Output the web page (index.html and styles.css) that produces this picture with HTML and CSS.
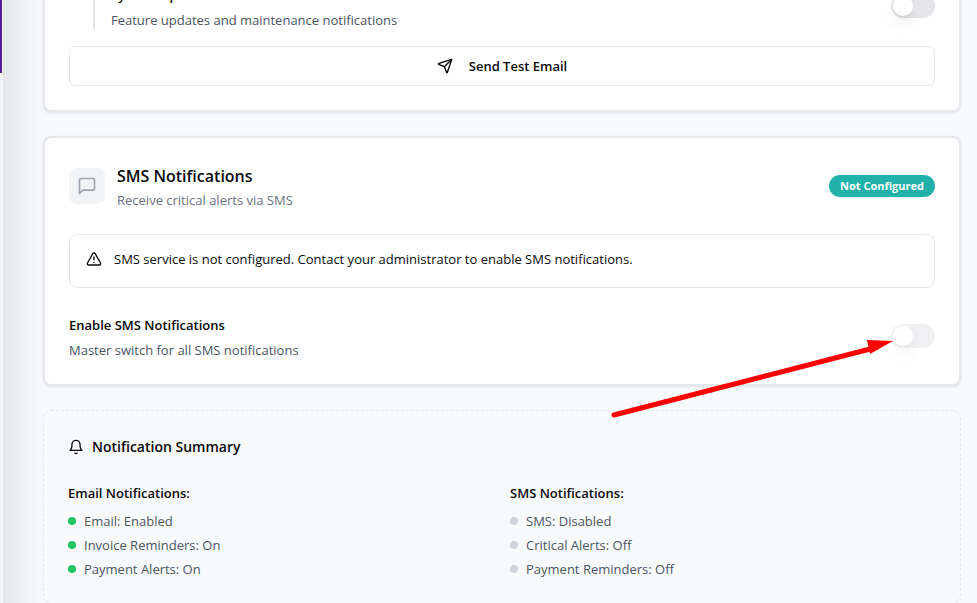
FILE: index.html
```html
<!DOCTYPE html>
<html lang="en">
<head>
<meta charset="utf-8">
<title>Notification Settings</title>
<link rel="stylesheet" href="styles.css">
</head>
<body>
<div class="page">
  <aside class="sidebar"><div class="sidebar-active"></div></aside>
  <main class="content">
    <section class="card">
      <div class="setting nested">
        <div>
          <label class="setting-label" for="system-updates">System Updates</label>
          <p class="setting-hint">Feature updates and maintenance notifications</p>
        </div>
        <input class="switch" type="checkbox" role="switch" id="system-updates">
      </div>
      <button class="test-button" type="button">
        <svg class="icon" viewBox="0 0 24 24"><path d="M14.536 21.686a.5.5 0 0 0 .937-.024l6.5-19a.496.496 0 0 0-.635-.635l-19 6.5a.5.5 0 0 0-.024.937l7.93 3.18a2 2 0 0 1 1.112 1.11z"/><path d="m21.854 2.147-10.94 10.939"/></svg>
        Send Test Email
      </button>
    </section>

    <section class="card">
      <header class="card-header">
        <div class="icon-box">
          <svg class="icon icon-large" viewBox="0 0 24 24"><path d="M21 15a2 2 0 0 1-2 2H7l-4 4V5a2 2 0 0 1 2-2h14a2 2 0 0 1 2 2z"/></svg>
        </div>
        <div class="card-heading">
          <h2 class="card-title">SMS Notifications</h2>
          <p class="card-subtitle">Receive critical alerts via SMS</p>
        </div>
        <span class="badge">Not Configured</span>
      </header>
      <div class="alert" role="alert">
        <svg class="icon" viewBox="0 0 24 24"><path d="m21.73 18-8-14a2 2 0 0 0-3.48 0l-8 14A2 2 0 0 0 4 21h16a2 2 0 0 0 1.73-3"/><path d="M12 9v4"/><path d="M12 17h.01"/></svg>
        <p>SMS service is not configured. Contact your administrator to enable SMS notifications.</p>
      </div>
      <div class="setting">
        <div>
          <label class="setting-label" for="enable-sms">Enable SMS Notifications</label>
          <p class="setting-hint">Master switch for all SMS notifications</p>
        </div>
        <input class="switch" type="checkbox" role="switch" id="enable-sms" disabled>
      </div>
    </section>

    <section class="summary">
      <h2 class="summary-title">
        <svg class="icon" viewBox="0 0 24 24"><path d="M6 8a6 6 0 0 1 12 0c0 7 3 9 3 9H3s3-2 3-9"/><path d="M10.3 21a1.94 1.94 0 0 0 3.4 0"/></svg>
        Notification Summary
      </h2>
      <div class="summary-grid">
        <div>
          <h3 class="summary-heading">Email Notifications:</h3>
          <ul class="status-list">
            <li class="status on">Email: Enabled</li>
            <li class="status on">Invoice Reminders: On</li>
            <li class="status on">Payment Alerts: On</li>
          </ul>
        </div>
        <div>
          <h3 class="summary-heading">SMS Notifications:</h3>
          <ul class="status-list">
            <li class="status">SMS: Disabled</li>
            <li class="status">Critical Alerts: Off</li>
            <li class="status">Payment Reminders: Off</li>
          </ul>
        </div>
      </div>
    </section>
  </main>
  <svg class="pointer" viewBox="0 0 284 80"><path class="pointer-line" d="M4 75 264 8"/><path class="pointer-head" d="M257 0 283 1 260 14Z"/></svg>
</div>
</body>
</html>
```
FILE: styles.css
```css
* {
  box-sizing: border-box;
}

body,
h2,
h3,
p,
ul {
  margin: 0;
}

body {
  font-family: "Segoe UI", "Open Sans", sans-serif;
  font-size: 13px;
  line-height: 20px;
  color: #09090b;
  background: #f9fafb;
}

.page {
  position: relative;
  display: flex;
  height: 100vh;
  overflow: hidden;
}

.sidebar {
  flex: none;
  width: 3px;
  background: #f3f4f8;
}

.sidebar-active {
  width: 2px;
  height: 73px;
  background: #551a98;
}

/* The gradient is the shade that the sidebar casts on the content. */
.content {
  flex: 1;
  display: flex;
  flex-direction: column;
  gap: 24px;
  margin-top: -44px;
  padding: 0 16px 0 40px;
  background: linear-gradient(to right, #e4e6e7, #e9ebec 10px, #f2f4f5 24px, #f7f8fa 36px, #f9fafc 48px);
}

.card {
  flex: none;
  padding: 24px;
  background: #fff;
  border: 2px solid #e5e7eb;
  border-radius: 8px;
  box-shadow: 0 1px 3px rgba(0, 0, 0, 0.1);
}

.icon {
  flex: none;
  width: 16px;
  height: 16px;
  fill: none;
  stroke: currentColor;
  stroke-width: 2;
  stroke-linecap: round;
  stroke-linejoin: round;
}

.icon-large {
  width: 20px;
  height: 20px;
}

.setting {
  display: flex;
  align-items: center;
  justify-content: space-between;
}

.nested {
  margin-left: 24px;
  padding-left: 16px;
  border-left: 2px solid #e5e7eb;
}

.setting-label {
  display: block;
  line-height: 26px;
  margin-bottom: 2px;
  font-weight: 600;
}

.setting-hint {
  color: #4b5563;
}

.switch {
  appearance: none;
  flex: none;
  width: 44px;
  height: 24px;
  margin: 0;
  padding: 2px;
  border-radius: 12px;
  background: #e4e4e9;
}

.switch::before {
  content: "";
  display: block;
  width: 20px;
  height: 20px;
  border-radius: 50%;
  background: #fff;
  box-shadow: 0 10px 15px -3px rgba(0, 0, 0, 0.1), 0 4px 6px -4px rgba(0, 0, 0, 0.1);
}

.switch:disabled {
  opacity: 0.5;
}

.test-button {
  display: flex;
  align-items: center;
  justify-content: center;
  gap: 16px;
  width: 100%;
  height: 40px;
  margin-top: 16px;
  font: inherit;
  font-weight: 600;
  color: inherit;
  background: #fff;
  border: 1px solid #e5e7eb;
  border-radius: 6px;
}

.card-header {
  display: flex;
  align-items: center;
  gap: 12px;
}

.icon-box {
  display: flex;
  padding: 8px;
  color: #9ca3af;
  background: #f3f4f6;
  border-radius: 8px;
}

.card-heading {
  flex: 1;
}

.card-title {
  font-size: 16px;
  line-height: 28px;
  font-weight: 600;
}

.card-subtitle {
  color: #6b7280;
}

.badge {
  padding: 1px 11px;
  font-size: 11px;
  font-weight: 700;
  color: #fff;
  background: #20b2aa;
  border-radius: 11px;
}

.alert {
  display: flex;
  gap: 12px;
  margin: 24px 0;
  padding: 16px 16px 20px;
  border: 1px solid #e5e7eb;
  border-radius: 8px;
  line-height: 16px;
}

.summary {
  flex: none;
  padding: 24px;
  border: 1px dashed #e5e7eb;
  border-radius: 8px;
}

.summary-title {
  display: flex;
  align-items: center;
  gap: 8px;
  margin-bottom: 24px;
  font-size: 14px;
  line-height: 24px;
  font-weight: 600;
}

.summary-grid {
  display: grid;
  grid-template-columns: 1fr 1fr;
  gap: 16px;
}

.summary-heading {
  margin-bottom: 8px;
  font-size: 13px;
  font-weight: 600;
}

.status-list {
  display: grid;
  gap: 4px;
  padding: 0;
  list-style: none;
}

.status {
  display: flex;
  align-items: center;
  gap: 8px;
  color: #4b5563;
}

.status::before {
  content: "";
  width: 8px;
  height: 8px;
  border-radius: 50%;
  background: #d1d5db;
}

.on::before {
  background: #22c55e;
}

.pointer {
  position: absolute;
  top: 340px;
  left: 610px;
  width: 284px;
  height: 80px;
  pointer-events: none;
}

.pointer-line {
  fill: none;
  stroke: #f00;
  stroke-width: 5;
  stroke-linecap: round;
}

.pointer-head {
  fill: #f00;
}
```
